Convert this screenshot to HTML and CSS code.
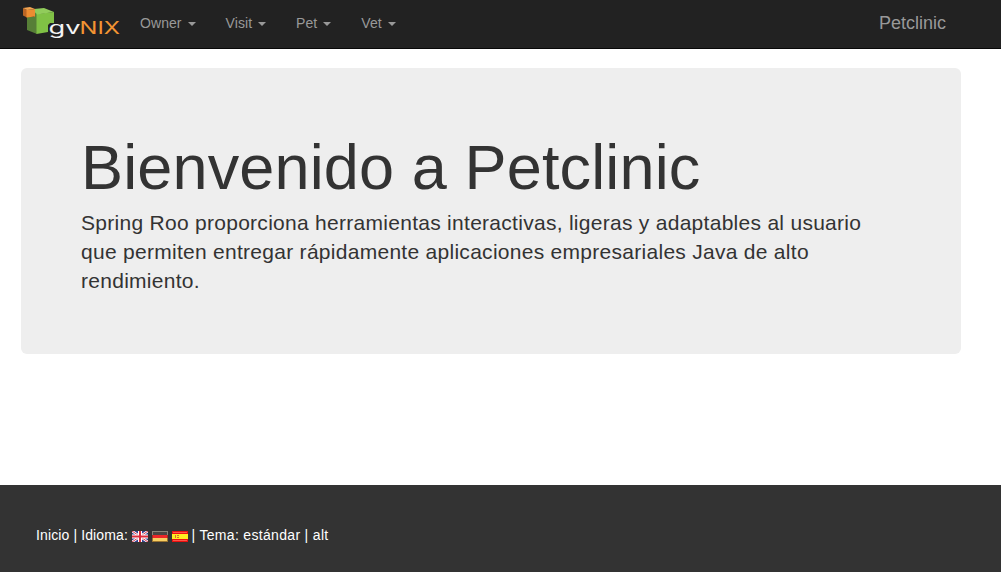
FILE: index.html
```html
<!DOCTYPE html>
<html lang="es">
<head>
<meta charset="utf-8">
<title>Petclinic</title>
<link rel="stylesheet" href="styles.css">
</head>
<body>
<header class="navbar">
  <a class="logo" aria-label="gvNIX">
    <svg width="100" height="40" viewBox="20 0 100 40">
      <path fill="#577f37" d="M27 17h7v-6l3 3v20l-10-4z"/>
      <path fill="#80c145" d="M36.500 14l17.500-2v11h-4l-2 2v7l-11.500 2z"/>
      <path fill="#91cc5b" d="M34 9l10-1 10 4-17 2.500-3-3z"/>
      <path fill="#ba6524" d="M23 8l4 2v7.500l-4-2z"/>
      <path fill="#ed8d31" d="M26.500 10l8.500-1v7.500l-8.500 1z"/>
      <path fill="#f3a451" d="M23 8l7-1 5 2-8 1z"/>
      <text class="logo-gv" x="48.500" y="34" textLength="32" lengthAdjust="spacingAndGlyphs">gv</text>
      <text class="logo-nix" x="79.500" y="34" textLength="40.500" lengthAdjust="spacingAndGlyphs">NIX</text>
    </svg>
  </a>
  <nav class="menu">
    <a>Owner <i class="caret"></i></a>
    <a>Visit <i class="caret"></i></a>
    <a>Pet <i class="caret"></i></a>
    <a>Vet <i class="caret"></i></a>
  </nav>
  <a class="brand">Petclinic</a>
</header>
<main class="jumbotron">
  <h1>Bienvenido a Petclinic</h1>
  <p>Spring Roo proporciona herramientas interactivas, ligeras y adaptables al usuario que permiten entregar rápidamente aplicaciones empresariales Java de alto rendimiento.</p>
</main>
<footer class="footer">
  <span class="language"><a>Inicio</a> | Idioma:</span>
  <svg class="flag" viewBox="0 0 16 11"><path fill="#35428f" d="M0 0h16v11H0z"/><path stroke="#fff" stroke-width="2.4" d="M0 0l16 11M16 0L0 11"/><path stroke="#d8354a" d="M0 0l16 11M16 0L0 11"/><path stroke="#fff" stroke-width="4" d="M8 0v11M0 5.500h16"/><path stroke="#dc2a3c" stroke-width="2" d="M8 0v11M0 5.500h16"/></svg>
  <svg class="flag" viewBox="0 0 16 11"><path fill="#88867a" d="M0 0h16v4H0z"/><path fill="#a92b20" d="M0 4h16v3H0z"/><path fill="#9b7431" d="M0 7h16v4H0z"/><path fill="#4a4643" d="M1 1h14v3H1z"/><path fill="#ed2828" d="M1 4h14v3H1z"/><path fill="#f8cf62" d="M1 7h14v3H1z"/></svg>
  <svg class="flag" viewBox="0 0 16 11"><path fill="#ed1010" d="M0 0h16v11H0z"/><path fill="#ff5548" d="M1 1h14v1H1zM1 9h14v1H1z"/><path fill="#ffed20" d="M0 3h16v5H0z"/><path fill="#d86b35" d="M3 4h1v3H3zM5 4h2v1H5zM5 6h2v1H5z"/></svg>
  <span class="theme">| Tema: <a>estándar</a> | <a>alt</a></span>
</footer>
</body>
</html>
```
FILE: styles.css
```css
* { box-sizing: border-box; }
body {
  margin: 0;
  min-height: 572px;
  display: flex;
  flex-direction: column;
  background: #fff;
  color: #333;
  font: 14px/20px "Liberation Sans", Arial, sans-serif;
}
.navbar {
  height: 49px;
  display: flex;
  align-items: flex-start;
  padding: 0 55px 0 20px;
  background: #222;
  border-bottom: 1px solid #080808;
  color: #999;
}
.logo { width: 105px; }
.logo svg { display: block; }
.logo-gv { font: 17px Inter, sans-serif; fill: #f4f4f4; }
.logo-nix { font: 17.5px Inter, sans-serif; fill: #f29432; }
.menu { display: flex; }
.menu a { padding: 13px 15px; white-space: nowrap; letter-spacing: .07px; }
.caret {
  display: inline-block;
  margin-left: 2px;
  vertical-align: middle;
  border-top: 4px solid;
  border-left: 4px solid transparent;
  border-right: 4px solid transparent;
}
.brand { margin-left: auto; padding-top: 13px; font-size: 18px; }
.jumbotron {
  width: 940px;
  height: 286px;
  margin: 19px 0 0 21px;
  padding: 68px 60px 0;
  border-radius: 6px;
  background: #eee;
}
h1 { margin: 0 0 9px; font-size: 63px; line-height: 63px; font-weight: 400; letter-spacing: .14px; }
p { margin: 0; font-size: 21px; line-height: 29px; letter-spacing: .28px; }
.footer {
  height: 87px;
  margin-top: auto;
  padding: 40px 36px 0;
  background: #333;
  color: #fff;
}
.language { letter-spacing: .12px; }
.theme { letter-spacing: .32px; }
.flag { width: 16px; height: 11px; vertical-align: -2px; }
```
